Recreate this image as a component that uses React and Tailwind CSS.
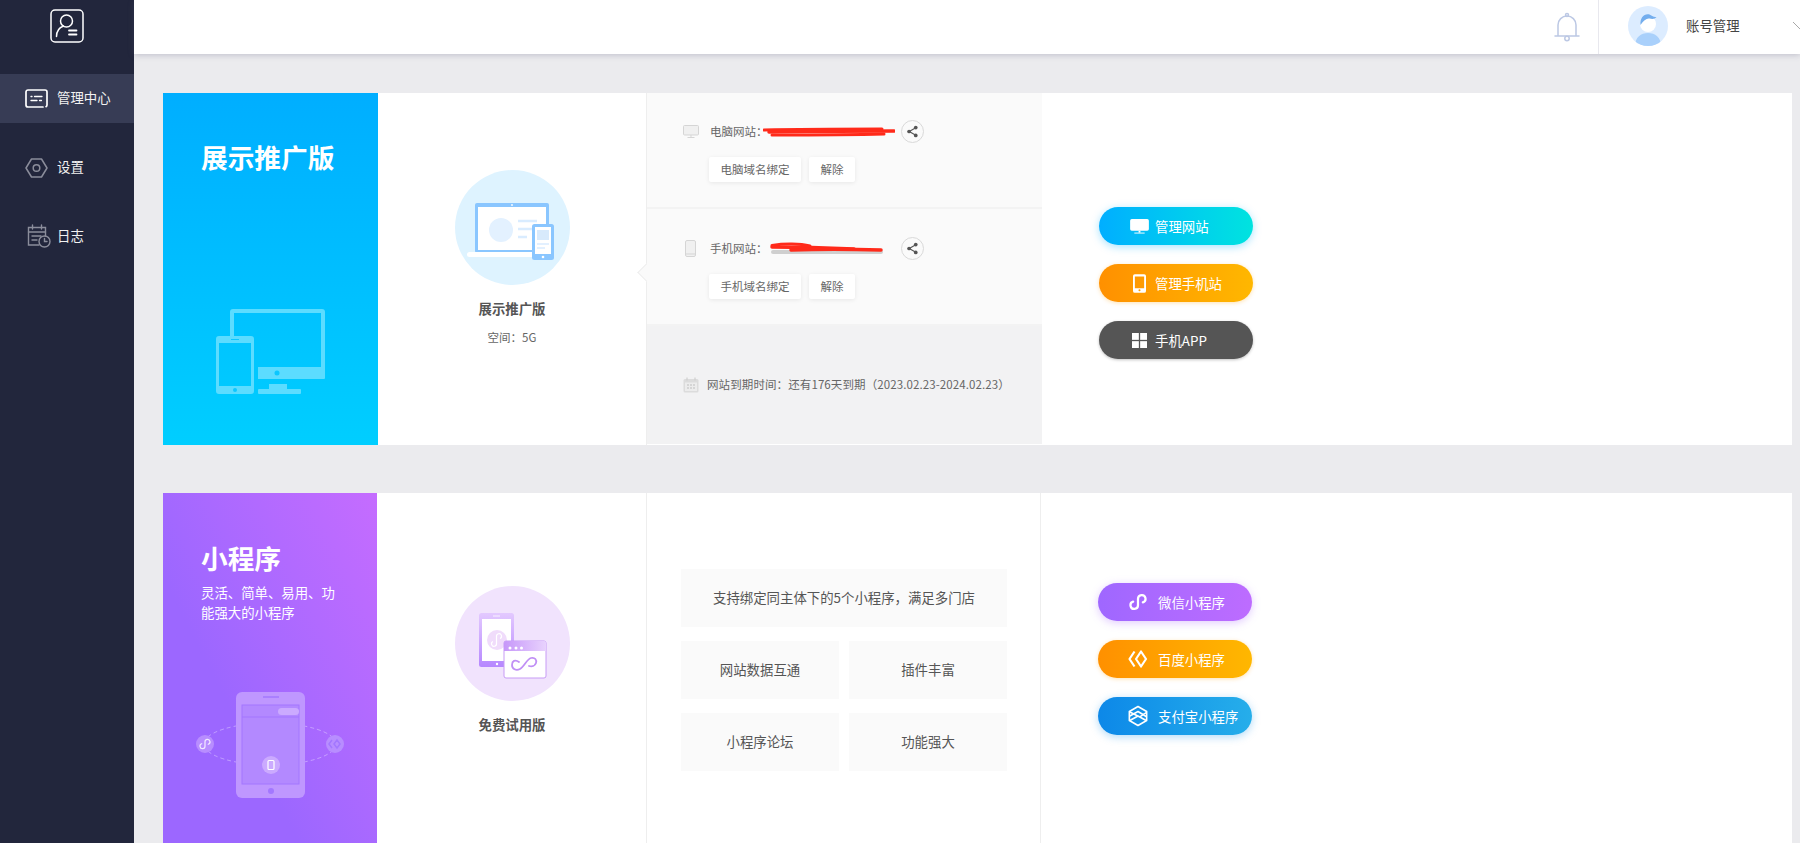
import React from "react";

const LinkGlyph = ({ className }) => (
  <svg viewBox="0 0 24 24" className={className} fill="none" stroke="currentColor" strokeWidth="3" strokeLinecap="round">
    <path d="M5.500 11.500a5 5 0 1 0 6.500 4.800V7.700a5 5 0 1 1 6.500 4.800" />
  </svg>
);

const BaiduGlyph = ({ className }) => (
  <svg viewBox="0 0 20 20" className={className} fill="none" stroke="currentColor" strokeWidth="2.200" strokeLinejoin="round">
    <path d="M6.500 2.500 1.500 10l5 7.500" />
    <path d="M13 2.500 8 10l5 7.500 5-7.500z" />
  </svg>
);

const AlipayGlyph = ({ className }) => (
  <svg viewBox="0 0 22 24" className={className} fill="none" stroke="currentColor" strokeWidth="1.800" strokeLinejoin="round">
    <path d="M11 1.500 20.500 7v10L11 22.500 1.500 17V7z" />
    <path d="M2 7.500 13 13l7.500-5M2 12l9-5 9 5.500M2 17l9-5 9 5" />
  </svg>
);

const MonitorGlyph = ({ className }) => (
  <svg viewBox="0 0 20 16" className={className} fill="currentColor">
    <rect x="0" y="0" width="20" height="12.500" rx="1.800" />
    <rect x="9" y="12.500" width="2" height="2" />
    <rect x="4.500" y="14.500" width="11" height="1" />
  </svg>
);

const OutlineMonitor = ({ className }) => (
  <svg viewBox="0 0 16 13" className={className} fill="none" stroke="currentColor">
    <rect x="0.500" y="0.500" width="15" height="9.500" rx="1" fill="#f0f0f0" />
    <path d="M8 10v2M4.500 12.500h7" />
  </svg>
);

const OutlinePhone = ({ className }) => (
  <svg viewBox="0 0 11 17" className={className} fill="none" stroke="currentColor">
    <rect x="0.500" y="0.500" width="10" height="16" rx="1.500" fill="#f0f0f0" />
    <path d="M0.500 14h10" />
  </svg>
);

const PhoneGlyph = ({ className }) => (
  <svg viewBox="0 0 14 20" className={className} fill="currentColor">
    <path fillRule="evenodd" d="M2 0h10a2 2 0 0 1 2 2v16a2 2 0 0 1-2 2H2a2 2 0 0 1-2-2V2a2 2 0 0 1 2-2zm0 2.500v12.500h10V2.500zM7 16.200a1.100 1.100 0 1 0 0 2.200 1.100 1.100 0 0 0 0-2.200z" />
  </svg>
);

const GridGlyph = ({ className }) => (
  <svg viewBox="0 0 16 16" className={className} fill="currentColor">
    <rect x="0" y="0" width="7.300" height="7.300" />
    <rect x="8.700" y="0" width="7.300" height="7.300" />
    <rect x="0" y="8.700" width="7.300" height="7.300" />
    <rect x="8.700" y="8.700" width="7.300" height="7.300" />
  </svg>
);

const ShareButton = () => (
  <div className="w-[23px] h-[23px] rounded-full border border-[#d9d9d9] bg-[#fafafa] flex items-center justify-center shrink-0">
    <svg viewBox="0 0 14 14" className="w-[13px] h-[13px] text-[#555]" fill="currentColor" stroke="currentColor">
      <path d="M10.500 3 3.500 7l7 4" strokeWidth="1.200" fill="none" />
      <circle cx="10.500" cy="2.800" r="2" stroke="none" />
      <circle cx="3.300" cy="7" r="2" stroke="none" />
      <circle cx="10.500" cy="11.200" r="2" stroke="none" />
    </svg>
  </div>
);

const Scribble = ({ second }) => (
  <svg viewBox="0 0 132 14" className="w-[132px] h-[14px] shrink-0" fill="none" stroke="#ff2a1a" strokeLinecap="round">
    {second ? (
      <>
        <path d="M10 10h108" stroke="#cfcfcf" strokeWidth="4" />
        <path d="M9 3.500c12-2 28-2 38 .5" strokeWidth="3" />
        <path d="M9 5c30 0 60 1 82 2" strokeWidth="3.500" />
        <path d="M28 8c25-1 60-1 90 0" strokeWidth="3.500" />
      </>
    ) : (
      <>
        <path d="M1 5c40-1 90-1 118-1" strokeWidth="3" />
        <path d="M6 7c40-1 85-1 125-1" strokeWidth="3.500" />
        <path d="M9 10c35 0 75 0 112-1" strokeWidth="3" />
      </>
    )}
  </svg>
);

function SiteRow({ icon, label, bindText, second, className }) {
  return (
    <div className={`border-b-2 border-[#f3f3f3] bg-[#fafafa] pl-[36px] ${className}`}>
      <div className="flex items-center h-[23px]">
        <div className="w-[27px] flex items-center text-[#d5d5d5]">{icon}</div>
        <span className="w-[53px] whitespace-nowrap text-[11.500px] text-[#666]">{label}</span>
        <Scribble second={second} />
        <div className="ml-[6px]">
          <ShareButton />
        </div>
      </div>
      <div className="flex gap-2 mt-[14px] ml-[26px]">
        <div className="w-[92px] h-[25px] bg-white rounded-[2px] shadow-[0_1px_4px_rgba(0,0,0,0.08)] text-[11.500px] text-[#666] flex items-center justify-center">
          {bindText}
        </div>
        <div className="w-[46px] h-[25px] bg-white rounded-[2px] shadow-[0_1px_4px_rgba(0,0,0,0.08)] text-[11.500px] text-[#666] flex items-center justify-center">
          解除
        </div>
      </div>
    </div>
  );
}

function ActionButton({ icon, text, className, iconBox }) {
  return (
    <div className={`w-[154px] h-[38px] rounded-full flex items-center pl-[26px] text-white text-[13.400px] ${className}`}>
      <div className={`flex items-center justify-center ${iconBox}`}>{icon}</div>
      <span className="whitespace-nowrap">{text}</span>
    </div>
  );
}

const FeatureBox = ({ text, className }) => (
  <div className={`h-[58px] bg-[#fafafa] text-[13.400px] text-[#555] flex items-center justify-center pb-[1px] ${className}`}>
    {text}
  </div>
);

const DisplayArt = () => (
  <svg viewBox="0 0 115 115" className="w-[115px] h-[115px]">
    <circle cx="57.500" cy="57.500" r="57.500" fill="#def3ff" />
    <rect x="20" y="33" width="74" height="50" rx="2" fill="#8ac6ff" />
    <rect x="23" y="37" width="68" height="43" fill="#fff" />
    <circle cx="57" cy="35" r="0.900" fill="#fff" />
    <rect x="12" y="82" width="79" height="5" rx="2.500" fill="#fff" />
    <circle cx="46" cy="60" r="12" fill="#e3f1ff" />
    <path d="M63 51h19M63 59h14M63 67h9" stroke="#d9ecff" strokeWidth="2.500" />
    <rect x="77" y="54" width="22" height="36" rx="2.500" fill="#8ac6ff" />
    <rect x="80" y="57" width="16" height="27" fill="#fff" />
    <rect x="82" y="60" width="12" height="10" fill="#d8eafc" />
    <path d="M82 74h12M82 78h8" stroke="#d9ecff" strokeWidth="1.500" />
    <circle cx="88" cy="87" r="1.300" fill="#fff" />
  </svg>
);

const MiniArt = () => (
  <svg viewBox="0 0 115 115" className="w-[115px] h-[115px]">
    <defs>
      <linearGradient id="miniPhone" x1="0" y1="0" x2="0" y2="1">
        <stop offset="0" stopColor="#e3c9ff" />
        <stop offset="1" stopColor="#b687ff" />
      </linearGradient>
      <linearGradient id="miniBar" x1="0" y1="0" x2="1" y2="0">
        <stop offset="0" stopColor="#c697f9" />
        <stop offset="1" stopColor="#e8d2fd" />
      </linearGradient>
    </defs>
    <circle cx="57.500" cy="57.500" r="57.500" fill="#f1e3fd" />
    <rect x="24" y="27" width="35" height="54" rx="2.500" fill="url(#miniPhone)" />
    <rect x="27" y="33" width="29" height="42" fill="#fff" />
    <path d="M38 30h7" stroke="#fff" strokeWidth="0.800" />
    <circle cx="42" cy="54" r="10" fill="#f0dcfb" />
    <path d="M38 55.500a2.500 2.500 0 1 0 3.500 2v-7a2.500 2.500 0 1 1 3.500 2" fill="none" stroke="#fff" strokeWidth="1.200" />
    <circle cx="42" cy="78" r="1.200" fill="#fff" />
    <rect x="49" y="55" width="42" height="37" rx="2" fill="#fff" stroke="#c79cf5" strokeWidth="1" />
    <path d="M49 57a2 2 0 0 1 2-2h38a2 2 0 0 1 2 2v8H49z" fill="url(#miniBar)" />
    <circle cx="55" cy="62" r="1.500" fill="#fff" />
    <circle cx="61" cy="62" r="1.500" fill="#fff" />
    <circle cx="66.500" cy="62" r="1.500" fill="#fff" />
    <path d="M64 76c-4-3-7-1-7 3s4 6 8 4 7-10 11-11 6 2 5 5-4 4-7 3" fill="none" stroke="#c08ff5" strokeWidth="1.800" strokeLinecap="round" />
  </svg>
);

const DevicesBg = () => (
  <svg viewBox="0 0 109 86" className="w-[109px] h-[86px]" fill="#5cdcff">
    <path d="M14 27V3a3 3 0 0 1 3-3h89a3 3 0 0 1 3 3v62a5 5 0 0 1-4 5H42V58h63V4H18v23z" />
    <rect x="42" y="58" width="67" height="12" rx="1" />
    <circle cx="61" cy="64" r="2.500" fill="#0cc7ff" />
    <rect x="53" y="75" width="18" height="5" />
    <rect x="42" y="80" width="43" height="5" rx="1" />
    <path fillRule="evenodd" d="M3 27h32a3 3 0 0 1 3 3v52a3 3 0 0 1-3 3H3a3 3 0 0 1-3-3V30a3 3 0 0 1 3-3zm0 7v43h32V34z" />
    <circle cx="19" cy="81" r="2" fill="#0cc7ff" />
    <rect x="15" y="30" width="8" height="1" fill="#0cc7ff" />
  </svg>
);

const MiniBg = () => (
  <svg viewBox="0 0 148 108" className="w-[148px] h-[108px]">
    <ellipse cx="74" cy="54" rx="66" ry="21" fill="none" stroke="#ffffff" strokeOpacity="0.350" strokeWidth="1" strokeDasharray="4 3" />
    <rect x="40" y="2" width="69" height="106" rx="6" fill="#bf97ff" />
    <rect x="46" y="15" width="57" height="79" fill="#b389ff" stroke="#a377ff" strokeWidth="1" />
    <path d="M46 27h57" stroke="#a377ff" strokeWidth="1.200" />
    <rect x="82" y="18" width="21" height="7" rx="3.500" fill="#cbaaff" />
    <path d="M67 7h16" stroke="#a377ff" strokeWidth="1.500" />
    <circle cx="75" cy="101" r="3" fill="#a377ff" />
    <circle cx="9" cy="54" r="9" fill="#b88dff" />
    <g transform="translate(3 48) scale(0.500)" fill="none" stroke="#fff" strokeOpacity="0.800" strokeWidth="2.500" strokeLinecap="round">
      <path d="M5.500 11.500a5 5 0 1 0 6.500 4.800V7.700a5 5 0 1 1 6.500 4.800" />
    </g>
    <circle cx="139" cy="54" r="9" fill="#b88dff" />
    <path d="M136 50l-3 4 3 4M141 50l-3 4 3 4 3-4z" fill="none" stroke="#a377ff" strokeWidth="1.500" />
    <circle cx="75" cy="75" r="9" fill="#cbaaff" />
    <rect x="72" y="70.500" width="6" height="9" rx="1" fill="none" stroke="#fff" strokeWidth="1.200" />
  </svg>
);

export default function App() {
  return (
    <div className="w-[1800px] h-[843px] overflow-hidden flex bg-[#ebebee] font-['Noto_Sans_CJK_SC',sans-serif]">
      {/* Sidebar */}
      <aside className="w-[134px] shrink-0 bg-[#22263c] text-[#f2f2f2] text-[13.400px]">
        <div className="h-[74px] pt-[9px] flex justify-center">
          <svg viewBox="0 0 34 34" className="w-[34px] h-[34px]" fill="none" stroke="#fff" strokeWidth="1.500" strokeLinecap="round">
            <rect x="1" y="1" width="32" height="32" rx="4" />
            <circle cx="16.500" cy="12" r="6" />
            <path d="M6.500 27.500c0-6 3-9 7-10.500" />
            <path d="M19 21.500h7.500M19 25.500h7.500" strokeWidth="1.800" />
          </svg>
        </div>
        <div className="flex flex-col gap-5">
          <div className="h-[49px] bg-[#373c55] flex items-center pl-[25px]">
            <svg viewBox="0 0 23 19" className="w-[23px] h-[19px] mr-[9px]" fill="none" stroke="#fff" strokeWidth="1.700" strokeLinecap="round">
              <path d="M18 18H3a2 2 0 0 1-2-2V3a2 2 0 0 1 2-2h17a2 2 0 0 1 2 2v13a2 2 0 0 1-1 1.700" />
              <path d="M6 7.500h1M9.500 7.500H17M6 11.500h6M14.500 11.500h2" strokeWidth="1.300" />
            </svg>
            <span className="mb-[2px]">管理中心</span>
          </div>
          <div className="h-[49px] flex items-center pl-[25px]">
            <svg viewBox="0 0 23 20" className="w-[23px] h-[20px] mr-[9px]" fill="none" stroke="#8b8d9b" strokeWidth="1.500">
              <path d="M6.500 1h10l5.500 9-5.500 9h-10L1 10z" strokeLinejoin="round" />
              <circle cx="11.500" cy="10" r="3.300" />
            </svg>
            <span className="mb-[2px]">设置</span>
          </div>
          <div className="h-[49px] flex items-center pl-[27px]">
            <svg viewBox="0 0 24 24" className="w-[24px] h-[24px] mr-[6px] mb-[2px]" fill="none" stroke="#8b8d9b" strokeWidth="1.400" strokeLinecap="round">
              <path d="M12 21H1.500V3.500h17V12" />
              <path d="M5.500 1v4M14.500 1v4M1.500 8h17M5 12h9M5 16h5" />
              <circle cx="17.500" cy="17.500" r="5.500" />
              <path d="M17.500 14.500v3h2.500" />
            </svg>
            <span className="mb-[3px]">日志</span>
          </div>
        </div>
      </aside>

      <div className="flex-1 min-w-0 flex flex-col">
        {/* Header */}
        <header className="h-[54px] shrink-0 bg-white shadow-[0_1px_6px_rgba(90,90,120,0.3)] flex justify-end items-center overflow-hidden relative">
          <svg viewBox="0 0 26 30" className="w-[26px] h-[30px] mr-[18px]" fill="none" stroke="#bcc8e4" strokeWidth="1.500" strokeLinecap="round">
            <path d="M1 24h24M4 24V13a9 9 0 0 1 18 0v11" />
            <circle cx="13" cy="3" r="1.500" />
            <circle cx="13" cy="26.500" r="2.200" />
          </svg>
          <div className="h-full border-l border-[#e8e8ee] flex items-center pl-[29px] w-[202px] shrink-0 overflow-hidden">
            <svg viewBox="0 0 40 40" className="w-[40px] h-[40px] shrink-0 mb-[3px]">
              <defs>
                <clipPath id="avatarClip">
                  <circle cx="20" cy="20" r="20" />
                </clipPath>
              </defs>
              <circle cx="20" cy="20" r="20" fill="#dcecff" />
              <g clipPath="url(#avatarClip)">
                <path d="M7 40c0-9 6-13 13-13s13 4 13 13z" fill="#a9d0fb" />
                <circle cx="20" cy="18" r="8" fill="#fff" />
                <path d="M12.500 19c-1-7 4-12 9-10.500 2 1 4 3 7 2.500-1.500 2-4 2.500-7 1.500-3-.5-6 2-9 6.500z" fill="#74aeee" />
              </g>
            </svg>
            <span className="ml-[18px] mb-[3px] text-[13.400px] text-[#444] whitespace-nowrap">账号管理</span>
            <svg viewBox="0 0 14 8" className="w-[14px] h-[8px] ml-[53px] shrink-0 mb-[3px]" fill="none" stroke="#a8a8a8">
              <path d="M0 0l7 7 7-7" />
            </svg>
          </div>
        </header>

        <main className="flex-1 min-h-0 pl-[29px] pr-[8px] pt-[39px]">
          {/* Display edition */}
          <section className="h-[352px] bg-white flex">
            <div className="w-[215px] shrink-0 flex flex-col pl-[38px] bg-linear-to-b from-[#00aeff] to-[#00ceff]">
              <h2 className="mt-[45px] text-[26.700px] leading-[38px] font-bold text-white whitespace-nowrap">展示推广版</h2>
              <div className="mt-auto mb-[50px] ml-[15px]">
                <DevicesBg />
              </div>
            </div>
            <div className="w-[268px] shrink-0 flex flex-col items-center pt-[77px]">
              <DisplayArt />
              <div className="mt-[13px] text-[13.400px] leading-[20px] font-bold text-[#555]">展示推广版</div>
              <div className="mt-[9px] text-[11.500px] leading-[20px] text-[#666]">空间：5G</div>
            </div>
            <div className="w-[396px] shrink-0 border-l border-[#eeeeee] relative flex flex-col">
              <SiteRow
                className="h-[116px] pt-[27px]"
                icon={<OutlineMonitor className="w-[16px] h-[13px]" />}
                label="电脑网站："
                bindText="电脑域名绑定"
              />
              <SiteRow
                className="h-[117px] pt-[28px]"
                icon={<OutlinePhone className="w-[11px] h-[17px] ml-[2px]" />}
                label="手机网站："
                bindText="手机域名绑定"
                second
              />
              <div className="absolute left-[-7px] top-[173px] w-[13px] h-[13px] rotate-45 bg-[#fafafa] border-l border-b border-[#eeeeee]" />
              <div className="flex-1 mb-[1px] bg-[#f2f2f3] flex items-center pl-[36px] text-[11.500px] tracking-[0.1px] text-[#666] whitespace-nowrap">
                <svg viewBox="0 0 16 16" className="w-[16px] h-[16px] mr-[8px] shrink-0">
                  <rect x="0.500" y="2" width="15" height="13.500" rx="1.500" fill="#dcdcdc" />
                  <path d="M4 0.500v3M12 0.500v3" stroke="#cfcfcf" strokeWidth="1.200" />
                  <rect x="2" y="5.500" width="12" height="8.500" fill="#ececec" />
                  <path d="M4 8h2M7 8h2M10 8h2M4 11h2M7 11h2M10 11h2" stroke="#bdbdbd" strokeWidth="1.200" />
                </svg>
                网站到期时间：还有176天到期（2023.02.23-2024.02.23）
              </div>
            </div>
            <div className="flex-1 flex flex-col gap-[19px] pl-[57px] pt-[114px]">
              <ActionButton
                className="bg-linear-to-r from-[#00aeff] to-[#00e3df] shadow-[0_2px_8px_rgba(0,174,255,0.35)]"
                iconBox="w-[30px] pr-[2px]"
                icon={<MonitorGlyph className="w-[19px] h-[15px] shrink-0" />}
                text="管理网站"
              />
              <ActionButton
                className="bg-linear-to-r from-[#ff9000] to-[#ffb700] shadow-[0_1px_4px_rgba(255,160,0,0.3)]"
                iconBox="w-[30px] pr-[2px]"
                icon={<PhoneGlyph className="w-[13px] h-[19px] shrink-0" />}
                text="管理手机站"
              />
              <ActionButton
                className="bg-[#555555] shadow-[0_1px_3px_rgba(0,0,0,0.25)]"
                iconBox="w-[30px] pr-[2px]"
                icon={<GridGlyph className="w-[15px] h-[15px] shrink-0" />}
                text="手机APP"
              />
            </div>
          </section>

          {/* Mini program */}
          <section className="mt-[48px] h-[420px] bg-white flex">
            <div className="w-[214px] shrink-0 pl-[38px] bg-linear-to-bl from-[#c56cff] to-[#9c67ff] to-60%">
              <h2 className="mt-[46px] text-[26.700px] leading-[38px] font-bold text-white">小程序</h2>
              <p className="mt-[5px] w-[140px] text-[13.400px] leading-[20px] text-white">灵活、简单、易用、功能强大的小程序</p>
              <div className="mt-[68px] ml-[-5px]">
                <MiniBg />
              </div>
            </div>
            <div className="w-[269px] shrink-0 flex flex-col items-center pt-[93px] pl-[1px]">
              <MiniArt />
              <div className="mt-[13px] text-[13.400px] leading-[20px] font-bold text-[#555]">免费试用版</div>
            </div>
            <div className="w-[395px] shrink-0 border-x border-[#eeeeee] pl-[34px] pt-[76px]">
              <div className="w-[326px] grid grid-cols-2 gap-x-[10px] gap-y-[14px]">
                <FeatureBox className="col-span-2" text="支持绑定同主体下的5个小程序，满足多门店" />
                <FeatureBox text="网站数据互通" />
                <FeatureBox text="插件丰富" />
                <FeatureBox text="小程序论坛" />
                <FeatureBox text="功能强大" />
              </div>
            </div>
            <div className="flex-1 flex flex-col gap-[19px] pl-[57px] pt-[90px]">
              <ActionButton
                className="bg-linear-to-r from-[#9f67ff] to-[#bd6cff] shadow-[0_2px_8px_rgba(170,105,255,0.35)]"
                iconBox="w-[34px] pr-[7px]"
                icon={<LinkGlyph className="w-[18px] h-[18px] shrink-0" />}
                text="微信小程序"
              />
              <ActionButton
                className="bg-linear-to-r from-[#ff9000] to-[#ffb700] shadow-[0_1px_4px_rgba(255,160,0,0.3)]"
                iconBox="w-[34px] pr-[7px]"
                icon={<BaiduGlyph className="w-[20px] h-[20px] shrink-0" />}
                text="百度小程序"
              />
              <ActionButton
                className="bg-linear-to-r from-[#0d88e8] to-[#26aeea] shadow-[0_2px_8px_rgba(30,150,235,0.35)]"
                iconBox="w-[34px] pr-[7px]"
                icon={<AlipayGlyph className="w-[20px] h-[22px] shrink-0" />}
                text="支付宝小程序"
              />
            </div>
          </section>
        </main>
      </div>
    </div>
  );
}
